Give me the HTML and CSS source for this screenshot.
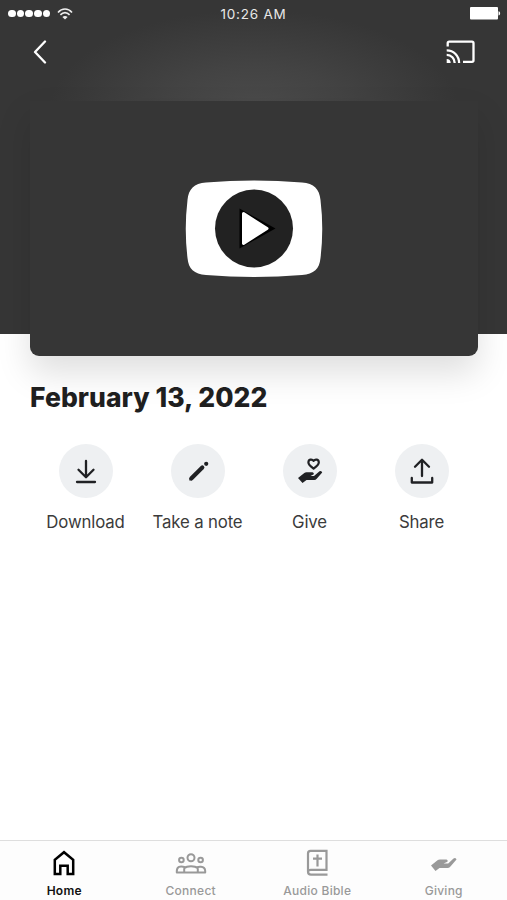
FILE: index.html
```html
<!DOCTYPE html>
<html lang="en">
<head>
<meta charset="utf-8">
<title>February 13, 2022</title>
<link rel="stylesheet" href="styles.css">
</head>
<body>
<div class="app">
  <header class="hero">
    <div class="status">
      <div class="signal">
        <span class="dots"><i></i><i></i><i></i><i></i><i></i></span>
        <svg class="wifi" width="16" height="12" viewBox="0 0 16 12" fill="none" stroke="#eee" stroke-width="1.6">
          <path d="M1 4.4C5-.2 11-.2 15 4.4M3.4 6.9c2.8-3 6.4-3 9.2 0"/>
          <path d="M8 11.6 5.4 9c1.400-1.500 3.800-1.500 5.200 0z" fill="#eee" stroke="none"/>
        </svg>
      </div>
      <span class="time">10:26 AM</span>
      <svg class="battery" width="31" height="13" viewBox="0 0 31 13" fill="#fff"><rect width="28" height="12.500" rx="1"/><path d="M28.500 4.200c2.200.4 2.200 3.800 0 4.200z"/></svg>
    </div>
    <nav class="toolbar">
      <svg width="14" height="24" viewBox="0 0 14 24" fill="none" stroke="#fff" stroke-width="2.300" stroke-linecap="round" stroke-linejoin="round"><path d="M12 1.500 2 12l10 10.500"/></svg>
      <svg width="29" height="24" viewBox="0 0 29 24" fill="none" stroke="#fff" stroke-width="2.300" stroke-linejoin="round"><path d="M1.700 6.500V3.200Q1.700 1.700 3.200 1.700H26Q27.500 1.700 27.500 3.200V20.300Q27.500 21.800 26 21.800H17"/><path d="M.7 10.400c7 0 12.400 5.400 12.400 12.600M.7 14.900c4.500 0 8 3.500 8 8.100"/><path d="M.7 19v4h4c0-2.500-1.500-4-4-4z" fill="#fff" stroke="none"/></svg>
    </nav>
    <div class="player">
      <svg width="138" height="98" viewBox="0 0 138 98">
        <path d="M21 2.500Q69-1.500 117 2.500C129 3.500 134.500 9 135.500 20Q139 49 135.500 78C134.500 89 129 94 117 95Q69 99 21 95C9 94 3.500 89 2.500 78Q-1 49 2.500 20C3.500 9 9 3.500 21 2.500Z" fill="#fff"/>
        <circle cx="69" cy="48.500" r="39" fill="#222"/>
        <path d="M54.500 28.500 90.500 48.500 54.500 68.500Z" fill="#000"/>
        <path d="M58.500 33.500 82 48.500 58.500 63.500Z" fill="#fff" stroke="#fff" stroke-width="3" stroke-linejoin="round"/>
      </svg>
    </div>
  </header>
  <main class="content">
    <h1>February 13, 2022</h1>
    <div class="actions">
      <div class="action"><span class="disc"><svg width="28" height="28" viewBox="0 0 28 28" fill="none" stroke="#202124" stroke-width="2.300" stroke-linecap="round" stroke-linejoin="round"><path d="M14 4v16M6.500 12.800 14 20.300l7.500-7.500M5 25h18"/></svg></span><span class="lbl">Download</span></div>
      <div class="action"><span class="disc"><svg width="28" height="28" viewBox="0 0 28 28" fill="none" stroke="#202124" stroke-width="4.200" stroke-linecap="round"><path d="M7.500 21.300 18.300 10.500"/><path d="M22.200 6.800h.01"/><path d="M5.300 23.600v-3l3 3z" fill="#202124" stroke="none"/></svg></span><span class="lbl">Take a note</span></div>
      <div class="action"><span class="disc"><svg width="28" height="28" viewBox="0 0 28 28"><path d="M17.600 11.600c-3-2.300-5.200-4-5.200-6.200 0-3 3.500-3.800 5.200-1.500 1.700-2.300 5.200-1.500 5.200 1.500 0 2.200-2.200 3.900-5.200 6.200z" fill="none" stroke="#202124" stroke-width="2.200" stroke-linejoin="round"/><path d="M2 21 8.300 16Q9.200 15.200 10.500 15.200H16.500Q18.200 15.500 17.800 17.300L14.500 19H18L23.500 14.200Q25.600 13.200 26.200 15.400L20.700 21.700Q19.700 23 18.300 23H10.500L6.500 26Z" fill="#202124"/></svg></span><span class="lbl">Give</span></div>
      <div class="action"><span class="disc"><svg width="28" height="28" viewBox="0 0 28 28" fill="none" stroke="#202124" stroke-width="2.300" stroke-linecap="round" stroke-linejoin="round"><path d="M14 19V3M7 9.800l7-7 7 7M3.800 21v4.500h20.400V21"/></svg></span><span class="lbl">Share</span></div>
    </div>
  </main>
  <footer class="tabs">
    <div class="tab active"><svg width="32" height="28" viewBox="0 0 32 28" fill="none" stroke="#000" stroke-width="2.500"><path d="M6.800 25V10.800L16 3.200l9.200 7.600V25h-5.500v-8.300h-7.400V25z"/></svg><span>Home</span></div>
    <div class="tab"><svg width="32" height="28" viewBox="0 0 32 28" fill="none" stroke="#999" stroke-width="2"><circle cx="16" cy="8.700" r="3.500"/><circle cx="6.400" cy="11" r="2.300"/><circle cx="25.600" cy="11" r="2.300"/><path d="M9.500 19C12 16.600 20 16.600 22.500 19M9.200 23.500V20Q9.200 18.500 10.200 18.200Q2 15.800 1.800 22V23.500H30.200V22C30 15.800 21.800 18.200 21.800 18.200Q22.800 18.500 22.800 20V23.500" stroke-linejoin="round"/></svg><span>Connect</span></div>
    <div class="tab"><svg width="32" height="28" viewBox="0 0 32 28" fill="none" stroke="#999" stroke-width="2.200"><path d="M26.500 25.700H10Q7 25.700 7 22.500V4.500Q7 1.900 9.500 1.900H25.500V20.800H9.800Q7 20.800 7 23M16.500 5.500v12M12 9.700h9"/></svg><span>Audio Bible</span></div>
    <div class="tab"><svg width="32" height="28" viewBox="0 0 32 28"><path d="M3 16.500 9.500 11.200Q10.300 10.500 12 10.500H18.500Q20.200 11 19.500 12.700L15.500 14.500H20.200L25.500 9.500Q28 8.300 28.500 10.600L22 18Q21.200 19 19.500 19H11.500L7.500 22Z" fill="#999"/></svg><span>Giving</span></div>
  </footer>
</div>
</body>
</html>
```
FILE: styles.css
```css
* { box-sizing: border-box; }
body { margin: 0; background: #fff; font-family: Inter, "Liberation Sans", sans-serif; }
svg { display: block; flex: none; }
.app { height: 900px; display: flex; flex-direction: column; overflow: hidden; }
.hero {
  height: 334px;
  flex: none;
  display: flex;
  flex-direction: column;
  background: radial-gradient(ellipse 205px 100px at 254px 110px, #4b4b4b 0%, #434343 45%, #363636 100%) #363636;
}
.status { height: 27px; flex: none; display: grid; grid-template-columns: 1fr auto 1fr; align-items: center; padding: 0 6px 0 8px; }
.signal { display: flex; align-items: center; gap: 7px; }
.dots { display: flex; gap: 1.200px; }
.dots i { width: 7.500px; height: 7.500px; border-radius: 50%; background: #fff; }
.time { color: #e8e8e8; font-size: 13.500px; line-height: 16px; letter-spacing: .8px; margin-right: 2px; }
.battery { justify-self: end; }
.toolbar { height: 74px; flex: none; display: flex; justify-content: space-between; align-items: flex-start; padding: 13px 32px 0 33px; }
.player {
  width: 448px;
  height: 255px;
  flex: none;
  margin-left: 30px;
  display: flex;
  justify-content: center;
  padding-top: 79px;
  background: #363636;
  border-radius: 0 0 9px 9px;
  box-shadow: 0 17px 34px rgba(0, 0, 0, .13);
}
.content { flex: 1; padding: 46px 29px 0 30px; }
h1 { margin: 0; color: #1f1f1f; font-size: 26.500px; line-height: 34px; font-weight: 800; letter-spacing: .05px; white-space: nowrap; position: relative; }
.actions { display: grid; grid-template-columns: repeat(4, 112px); margin-top: 30px; }
.action { display: flex; flex-direction: column; align-items: center; gap: 13px; }
.disc { width: 54px; height: 54px; border-radius: 50%; background: #eef0f2; display: flex; align-items: center; justify-content: center; }
.lbl { color: #3b3b3b; font-size: 16.800px; line-height: 22px; letter-spacing: -.15px; margin-right: 1px; white-space: nowrap; }
.tabs { height: 60px; flex: none; display: grid; grid-template-columns: repeat(4, 1fr); border-top: 1px solid #dedede; background: #fdfdfd; padding-left: 1px; }
.tab { display: flex; flex-direction: column; align-items: center; padding-top: 8px; gap: 6px; color: #999; font-size: 12px; line-height: 16px; font-weight: 500; letter-spacing: .27px; }
.active { color: #111; font-weight: 600; }
```
